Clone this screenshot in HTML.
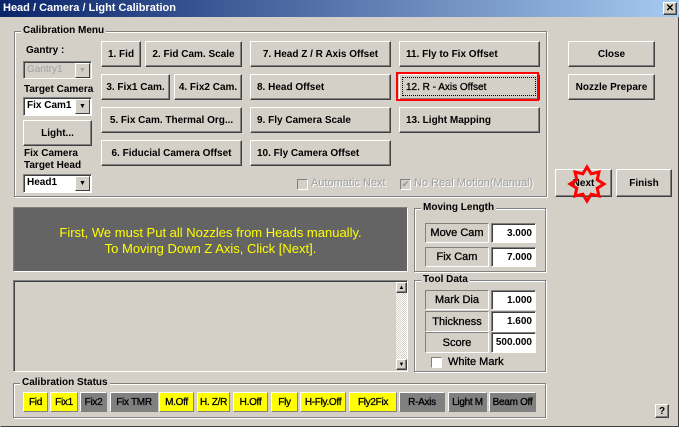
<!DOCTYPE html>
<html><head><style>
*{box-sizing:border-box;margin:0;padding:0}
body{width:679px;height:427px;background:#d4d0c8;font-family:"Liberation Sans",sans-serif;font-size:10px;font-weight:bold;color:#000;position:relative;overflow:hidden}
.a{position:absolute;white-space:nowrap}
.title{left:0;top:0;width:679px;height:17px;background:linear-gradient(90deg,#0a246a,#a6caf0);color:#fff;font-size:11px;line-height:17px;padding-left:3px}
.btn{position:absolute;background:#d4d0c8;border:1px solid;border-color:#fff #404040 #404040 #fff;box-shadow:inset -1px -1px 0 #808080;display:flex;align-items:center;justify-content:center;white-space:nowrap;font-size:10px;overflow:hidden}
.btn.l{justify-content:flex-start;padding-left:6px}
.grp{position:absolute;border:1px solid #808080;box-shadow:1px 1px 0 #fff, inset 1px 1px 0 #fff}
.grp>span{position:absolute;top:-7px;left:6px;background:#d4d0c8;padding:0 2px;font-size:10px;line-height:12px}
.combo{position:absolute;background:#fff;border:1px solid;border-color:#808080 #fff #fff #808080;box-shadow:inset 1px 1px 0 #404040;padding-left:3px;line-height:16px;font-size:10px}
.combo i{position:absolute;right:1px;top:1px;width:15px;height:15px;background:#d4d0c8;border:1px solid;border-color:#fff #404040 #404040 #fff;font-style:normal;font-size:7px;text-align:center;line-height:13px}
.lbl{position:absolute;border:1px solid;border-color:#808080 #fff #fff #808080;display:flex;align-items:center;justify-content:center;font-weight:normal;font-size:11px;-webkit-text-stroke:0.3px #000;white-space:nowrap}
.val{position:absolute;background:#fff;border:1px solid;border-color:#808080 #fff #fff #808080;box-shadow:inset 1px 1px 0 #404040;text-align:right;padding-right:3px;font-size:10px;display:flex;align-items:center;justify-content:flex-end}
.cell{position:absolute;top:392px;height:20px;display:flex;align-items:center;justify-content:center;font-weight:normal;-webkit-text-stroke:0.3px #000;font-size:10px;letter-spacing:-0.3px;white-space:nowrap;overflow:hidden;border:1px solid;border-color:#fff #808080 #808080 #fff}
.y{background:#ffff00}.g{background:#808080}
.chk{position:absolute;width:11px;height:11px;background:#fff;border:1px solid;border-color:#808080 #fff #fff #808080}
.dis{color:#a0a0a0;font-weight:normal;text-shadow:1px 1px 0 #fff;font-size:11px}
</style></head><body>
<div class="a" style="left:0;top:0;width:679px;height:427px;border:1px solid;border-color:#d4d0c8 #404040 #404040 #d4d0c8"></div>
<div class="a title">Head / Camera / Light Calibration</div>
<div class="btn" style="left:663px;top:2px;width:14px;height:13px;font-size:10px">✕</div>

<div class="grp" style="left:14px;top:31px;width:533px;height:166px"><span>Calibration Menu</span></div>
<div class="a" style="left:26px;top:45px">Gantry :</div>
<div class="combo" style="left:23px;top:61px;width:69px;height:18px;background:#d4d0c8;color:#a0a0a0;font-weight:normal">Gantry1<i style="color:#a0a0a0">▼</i></div>
<div class="a" style="left:24px;top:84px">Target Camera</div>
<div class="combo" style="left:23px;top:97px;width:69px;height:19px">Fix Cam1<i>▼</i></div>
<div class="btn" style="left:23px;top:120px;width:69px;height:26px">Light...</div>
<div class="a" style="left:24px;top:148px;line-height:12px">Fix Camera<br>Target Head</div>
<div class="combo" style="left:23px;top:174px;width:69px;height:19px">Head1<i>▼</i></div>

<div class="btn" style="left:101px;top:41px;width:40px;height:26px">1. Fid</div>
<div class="btn" style="left:145px;top:41px;width:97px;height:26px">2. Fid Cam. Scale</div>
<div class="btn" style="left:250px;top:41px;width:141px;height:26px">7. Head Z / R Axis Offset</div>
<div class="btn l" style="left:399px;top:41px;width:141px;height:26px">11. Fly to Fix Offset</div>
<div class="btn" style="left:101px;top:74px;width:69px;height:26px">3. Fix1 Cam.</div>
<div class="btn" style="left:174px;top:74px;width:68px;height:26px">4. Fix2 Cam.</div>
<div class="btn l" style="left:250px;top:74px;width:141px;height:26px">8. Head Offset</div>
<div class="btn l" style="left:399px;top:74px;width:141px;height:26px;font-weight:normal;-webkit-text-stroke:.3px #000">12. R - Axis Offset</div>
<div class="a" style="left:402px;top:77px;width:134px;height:19px;border:1px dotted #000"></div>
<div class="a" style="left:396px;top:72px;width:143px;height:29px;border:2px solid #f00"></div>
<div class="btn" style="left:101px;top:107px;width:141px;height:26px">5. Fix Cam. Thermal Org...</div>
<div class="btn l" style="left:250px;top:107px;width:141px;height:26px">9. Fly Camera Scale</div>
<div class="btn l" style="left:399px;top:107px;width:141px;height:26px">13. Light Mapping</div>
<div class="btn" style="left:101px;top:140px;width:141px;height:26px">6. Fiducial Camera Offset</div>
<div class="btn l" style="left:250px;top:140px;width:141px;height:26px">10. Fly Camera Offset</div>

<div class="chk" style="left:297px;top:179px;background:#d4d0c8"></div>
<div class="a dis" style="left:311px;top:177px">Automatic Next</div>
<div class="chk" style="left:400px;top:179px;background:#d4d0c8;font-size:9px;color:#a0a0a0;line-height:9px;text-align:center">✔</div>
<div class="a dis" style="left:414px;top:177px">No Real Motion(Manual)</div>

<div class="btn" style="left:568px;top:41px;width:87px;height:26px">Close</div>
<div class="btn" style="left:568px;top:74px;width:87px;height:26px">Nozzle Prepare</div>
<div class="btn" style="left:555px;top:169px;width:57px;height:28px">Next</div>
<div class="btn" style="left:616px;top:169px;width:56px;height:28px">Finish</div>
<svg class="a" style="left:0;top:0" width="679" height="427"><polygon points="587,167 591.2,173.8 599,172 597.2,179.8 604,184 597.2,188.2 599,196 591.2,194.2 587,201 582.8,194.2 575,196 576.8,188.2 570,184 576.8,179.8 575,172 582.8,173.8" fill="none" stroke="#f00" stroke-width="3"/></svg>

<div class="a" style="left:13px;top:207px;width:395px;height:65px;background:#646464;border:1px solid;border-color:#808080 #fff #fff #808080;color:#ffff00;font-weight:normal;font-size:13px;text-align:center;line-height:16px;padding-top:17px">First, We must Put all Nozzles from Heads manually.<br>To Moving Down Z Axis, Click [Next].</div>

<div class="grp" style="left:414px;top:208px;width:132px;height:64px"><span>Moving Length</span></div>
<div class="lbl" style="left:425px;top:223px;width:64px;height:20px">Move Cam</div>
<div class="val" style="left:491px;top:223px;width:45px;height:20px">3.000</div>
<div class="lbl" style="left:425px;top:247px;width:64px;height:20px">Fix Cam</div>
<div class="val" style="left:491px;top:247px;width:45px;height:20px">7.000</div>

<div class="a" style="left:13px;top:280px;width:395px;height:92px;border:1px solid;border-color:#808080 #fff #fff #808080;box-shadow:inset 1px 1px 0 #404040"></div>
<div class="a" style="left:396px;top:282px;width:11px;height:88px;background:repeating-conic-gradient(#fff 0 25%,#d4d0c8 0 50%) 0 0/2px 2px"></div>
<div class="btn" style="left:396px;top:282px;width:11px;height:11px;font-size:6px">▲</div>
<div class="btn" style="left:396px;top:359px;width:11px;height:11px;font-size:6px">▼</div>

<div class="grp" style="left:414px;top:280px;width:132px;height:92px"><span>Tool Data</span></div>
<div class="lbl" style="left:425px;top:290px;width:64px;height:20px">Mark Dia</div>
<div class="val" style="left:491px;top:290px;width:45px;height:20px">1.000</div>
<div class="lbl" style="left:425px;top:311px;width:64px;height:21px">Thickness</div>
<div class="val" style="left:491px;top:311px;width:45px;height:21px">1.600</div>
<div class="lbl" style="left:425px;top:332px;width:64px;height:21px">Score</div>
<div class="val" style="left:491px;top:332px;width:45px;height:21px">500.000</div>
<div class="chk" style="left:431px;top:357px"></div>
<div class="a" style="left:448px;top:356px;font-weight:normal;font-size:11px;-webkit-text-stroke:.3px #000">White Mark</div>

<div class="grp" style="left:13px;top:383px;width:533px;height:35px"><span>Calibration Status</span></div>
<div class="cell y" style="left:23px;width:25px">Fid</div>
<div class="cell y" style="left:50px;width:28px">Fix1</div>
<div class="cell g" style="left:80px;width:27px">Fix2</div>
<div class="cell g" style="left:110px;width:48px">Fix TMR</div>
<div class="cell y" style="left:159px;width:35px">M.Off</div>
<div class="cell y" style="left:197px;width:33px">H. Z/R</div>
<div class="cell y" style="left:233px;width:35px">H.Off</div>
<div class="cell y" style="left:271px;width:27px">Fly</div>
<div class="cell y" style="left:300px;width:46px">H-Fly.Off</div>
<div class="cell y" style="left:349px;width:48px">Fly2Fix</div>
<div class="cell g" style="left:399px;width:46px">R-Axis</div>
<div class="cell g" style="left:448px;width:39px">Light M</div>
<div class="cell g" style="left:489px;width:47px">Beam Off</div>

<div class="btn" style="left:655px;top:404px;width:14px;height:14px;font-size:10px">?</div>
</body></html>
